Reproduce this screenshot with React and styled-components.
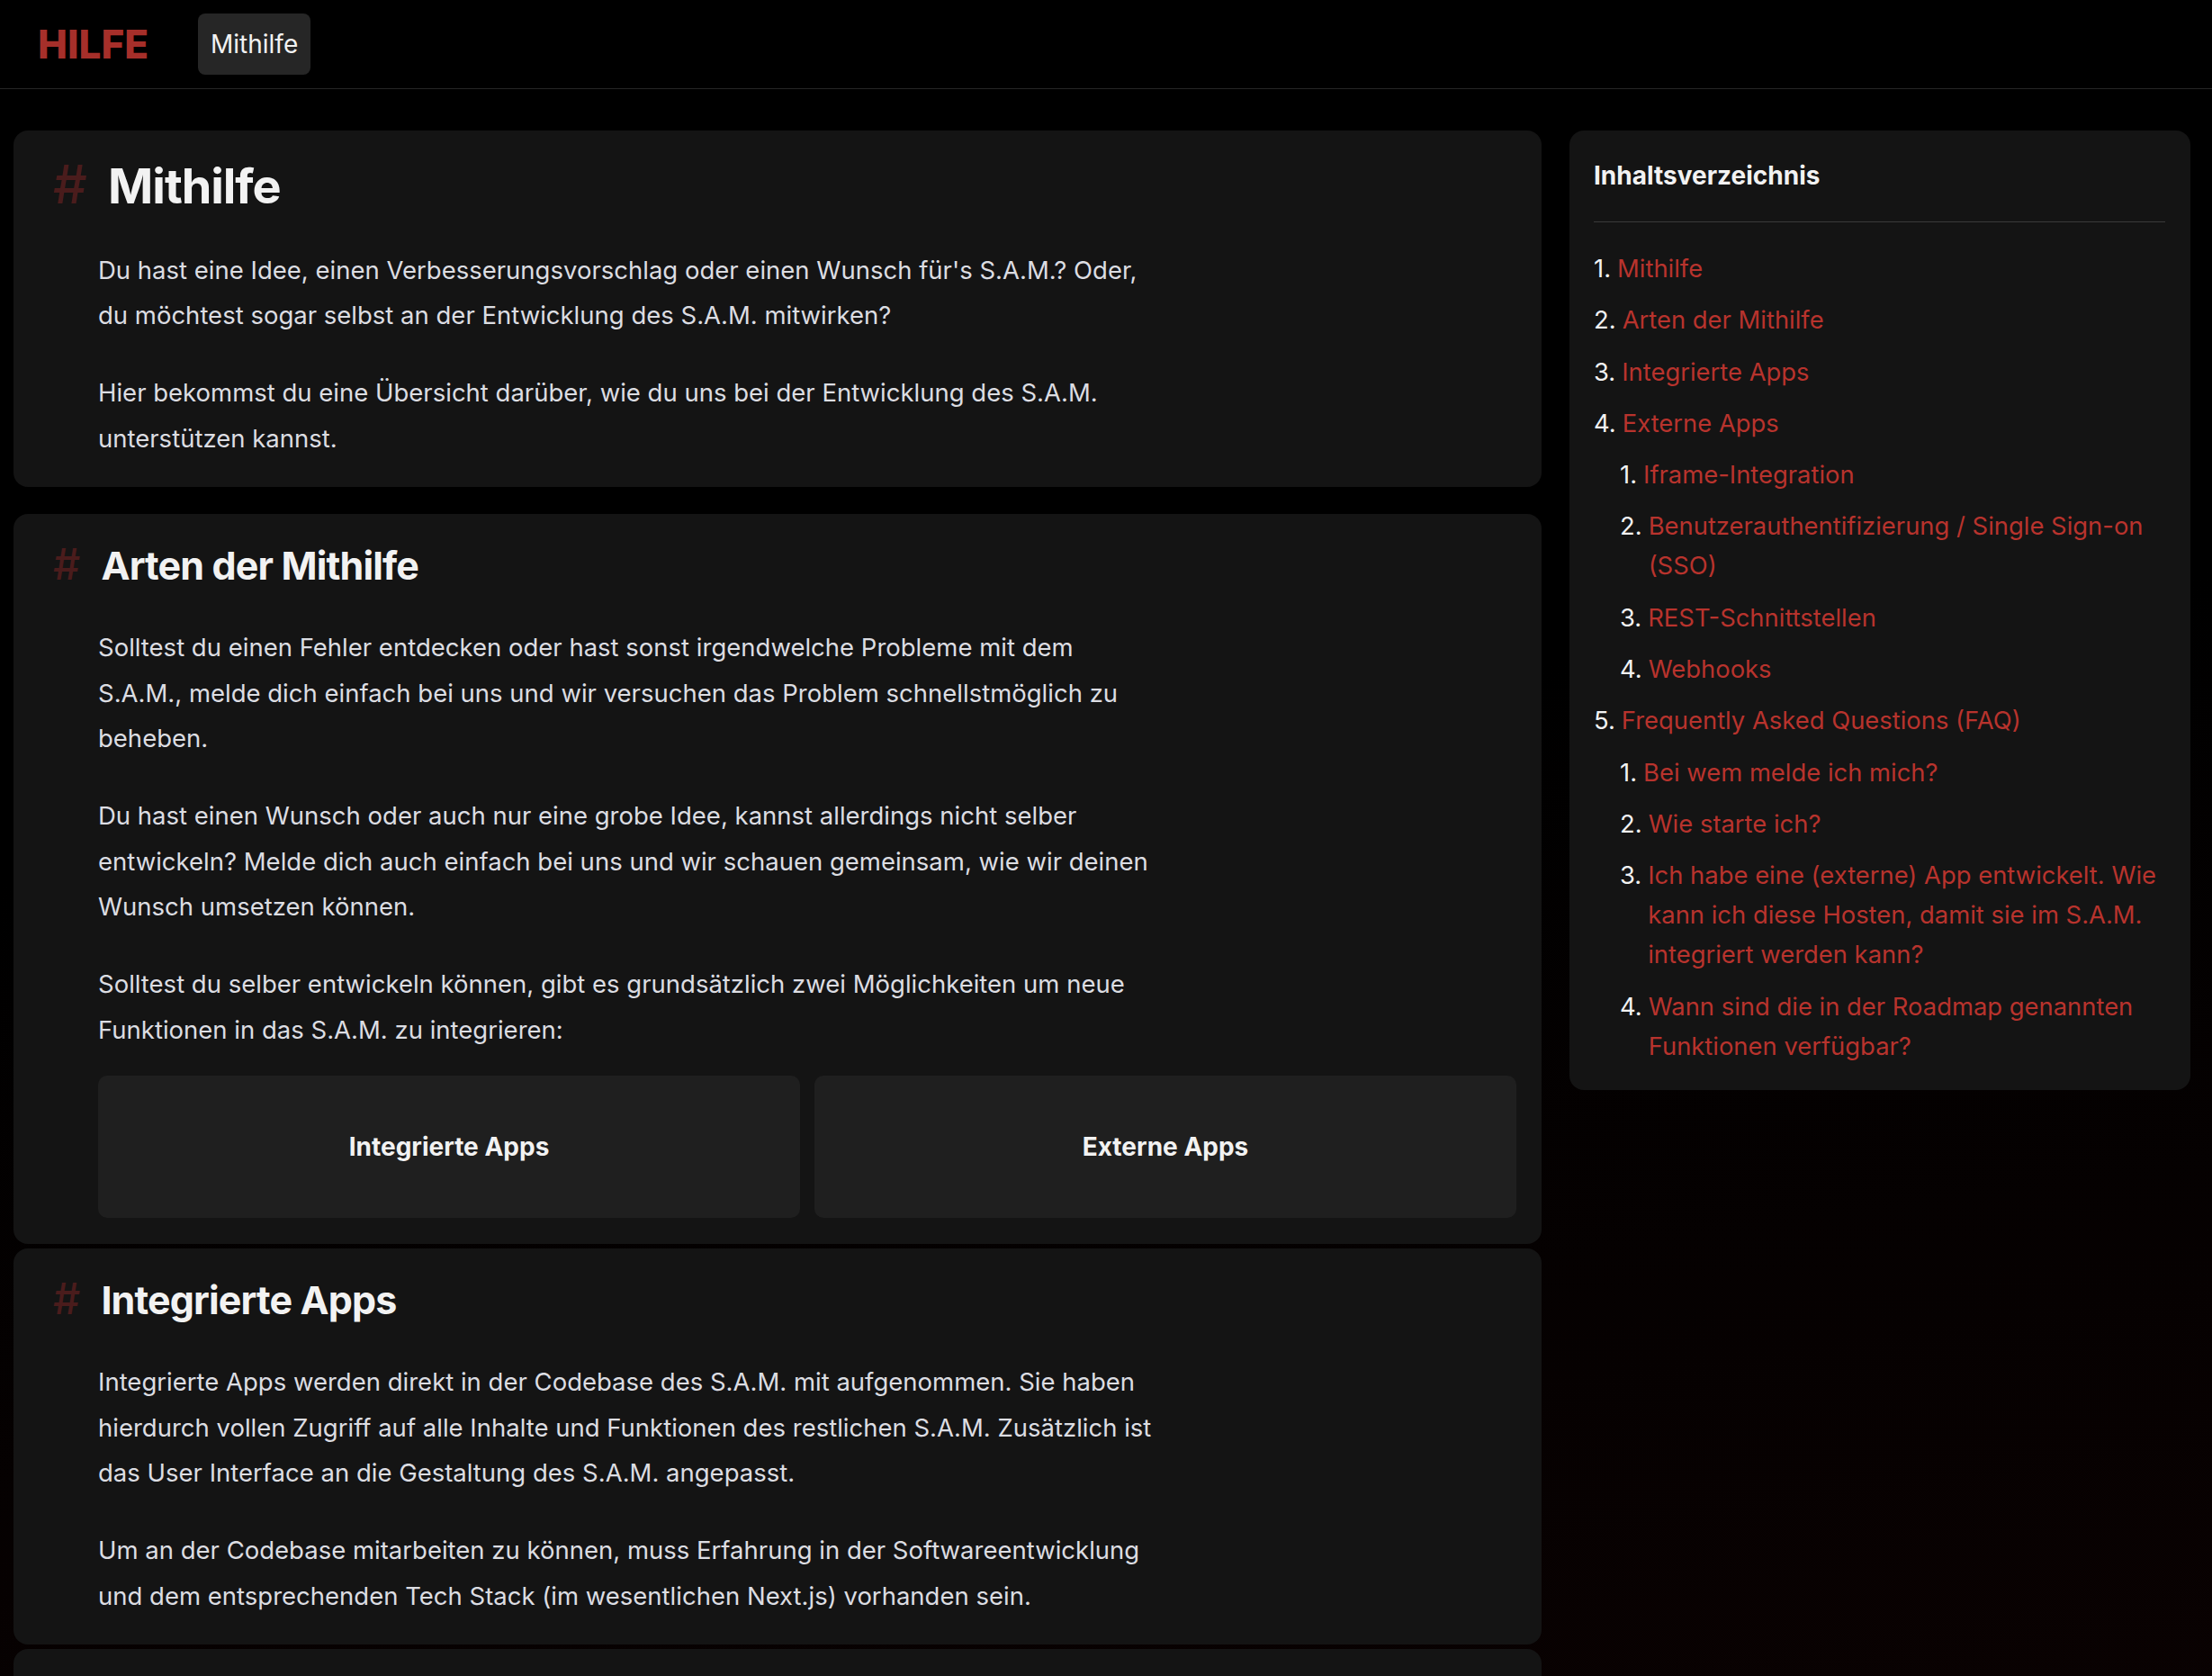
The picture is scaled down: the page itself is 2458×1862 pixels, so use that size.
import React from 'react';
import styled, { createGlobalStyle } from 'styled-components';

const GlobalStyle = createGlobalStyle`
  * {
    box-sizing: border-box;
  }

  html,
  body {
    margin: 0;
    padding: 0;
    background: #000;
    overflow: hidden;
  }

  body {
    font-family: Inter, 'Noto Sans', 'Liberation Sans', sans-serif;
    color: #dcdde2;
  }
`;

const sections = [
  {
    id: 'mithilfe',
    title: 'Mithilfe',
    level: 1,
    paragraphs: [
      "Du hast eine Idee, einen Verbesserungsvorschlag oder einen Wunsch für's S.A.M.? Oder, du möchtest sogar selbst an der Entwicklung des S.A.M. mitwirken?",
      'Hier bekommst du eine Übersicht darüber, wie du uns bei der Entwicklung des S.A.M. unterstützen kannst.',
    ],
  },
  {
    id: 'arten',
    title: 'Arten der Mithilfe',
    level: 2,
    paragraphs: [
      'Solltest du einen Fehler entdecken oder hast sonst irgendwelche Probleme mit dem S.A.M., melde dich einfach bei uns und wir versuchen das Problem schnellstmöglich zu beheben.',
      'Du hast einen Wunsch oder auch nur eine grobe Idee, kannst allerdings nicht selber entwickeln? Melde dich auch einfach bei uns und wir schauen gemeinsam, wie wir deinen Wunsch umsetzen können.',
      'Solltest du selber entwickeln können, gibt es grundsätzlich zwei Möglichkeiten um neue Funktionen in das S.A.M. zu integrieren:',
    ],
    links: ['Integrierte Apps', 'Externe Apps'],
  },
  {
    id: 'integrierte-apps',
    title: 'Integrierte Apps',
    level: 2,
    paragraphs: [
      'Integrierte Apps werden direkt in der Codebase des S.A.M. mit aufgenommen. Sie haben hierdurch vollen Zugriff auf alle Inhalte und Funktionen des restlichen S.A.M. Zusätzlich ist das User Interface an die Gestaltung des S.A.M. angepasst.',
      'Um an der Codebase mitarbeiten zu können, muss Erfahrung in der Softwareentwicklung und dem entsprechenden Tech Stack (im wesentlichen Next.js) vorhanden sein.',
    ],
  },
  {
    id: 'externe-apps',
    title: 'Externe Apps',
    level: 2,
    paragraphs: [
      'Externe Apps werden unabhängig vom S.A.M. entwickelt und gehostet und über verschiedene Schnittstellen eingebunden.',
    ],
  },
];

const toc = [
  { label: 'Mithilfe' },
  { label: 'Arten der Mithilfe' },
  { label: 'Integrierte Apps' },
  {
    label: 'Externe Apps',
    children: [
      'Iframe-Integration',
      'Benutzerauthentifizierung / Single Sign-on (SSO)',
      'REST-Schnittstellen',
      'Webhooks',
    ],
  },
  {
    label: 'Frequently Asked Questions (FAQ)',
    children: [
      'Bei wem melde ich mich?',
      'Wie starte ich?',
      'Ich habe eine (externe) App entwickelt. Wie kann ich diese Hosten, damit sie im S.A.M. integriert werden kann?',
      'Wann sind die in der Roadmap genannten Funktionen verfügbar?',
    ],
  },
];

const App = () => {
  return (
    <Page>
      <GlobalStyle />
      <Header>
        <Logo>HILFE</Logo>
        <NavButton type="button">Mithilfe</NavButton>
      </Header>

      <Layout>
        <Main>
          {sections.map((section, i) => (
            <Section key={section.id} $gap={i === 0 ? 30 : 5}>
              <Heading as={section.level === 1 ? 'h1' : 'h2'} $level={section.level}>
                <Hash $level={section.level}>#</Hash>
                {section.title}
              </Heading>
              {section.paragraphs.map((text) => (
                <Paragraph key={text.slice(0, 20)}>{text}</Paragraph>
              ))}
              {section.links && (
                <LinkGrid>
                  {section.links.map((label) => (
                    <LinkCard key={label} href={'#' + label}>
                      {label}
                    </LinkCard>
                  ))}
                </LinkGrid>
              )}
            </Section>
          ))}
        </Main>

        <Toc>
          <TocTitle>Inhaltsverzeichnis</TocTitle>
          <Divider />
          <TocList>
            {toc.map((item, i) => (
              <TocItem key={item.label}>
                <TocRow>
                  <TocNum>{i + 1}.</TocNum>
                  <TocLink href="#">{item.label}</TocLink>
                </TocRow>
                {item.children && (
                  <TocList $nested>
                    {item.children.map((child, j) => (
                      <TocItem key={child}>
                        <TocRow>
                          <TocNum>{j + 1}.</TocNum>
                          <TocLink href="#">{child}</TocLink>
                        </TocRow>
                      </TocItem>
                    ))}
                  </TocList>
                )}
              </TocItem>
            ))}
          </TocList>
        </Toc>
      </Layout>
    </Page>
  );
};

const Page = styled.div`
  min-height: 100vh;
  background: linear-gradient(172deg, #000 0%, #000 40%, #0b0202 100%);
`;

const Header = styled.header`
  height: 99px;
  display: flex;
  align-items: center;
  gap: 55px;
  padding: 0 42px;
  background: #000;
  border-bottom: 1px solid #262626;
`;

const Logo = styled.div`
  font-size: 44px;
  font-weight: 800;
  line-height: 1;
  color: #a62f2a;
`;

const NavButton = styled.button`
  height: 68px;
  padding: 0 14px;
  border: none;
  border-radius: 8px;
  background: #262626;
  color: #f2f2f2;
  font-family: inherit;
  font-size: 28px;
  font-weight: 400;
  cursor: pointer;
`;

const Layout = styled.div`
  display: grid;
  grid-template-columns: 1fr 690px;
  gap: 31px;
  align-items: start;
  padding: 46px 24px 0 15px;
`;

const Main = styled.main`
  display: flex;
  flex-direction: column;
`;

const Section = styled.section`
  background: #141414;
  border-radius: 16px;
  padding: 30px 28px 29px 94px;
  margin-bottom: ${(p) => p.$gap}px;
`;

const Heading = styled.h2`
  display: flex;
  align-items: baseline;
  margin: ${(p) => (p.$level === 1 ? '0 0 35px' : '1.5px 0 40px')} -50px;
  font-size: ${(p) => (p.$level === 1 ? 54 : 43)}px;
  font-weight: 700;
  line-height: 1.2;
  letter-spacing: -0.02em;
  color: #f2f2f2;
`;

const Hash = styled.span`
  font-size: 1.1em;
  line-height: 1;
  color: #4a1c1c;
  font-weight: 500;
  letter-spacing: 0;
  margin-right: ${(p) => (p.$level === 1 ? 0.39 : 0.49)}em;
`;

const Paragraph = styled.p`
  margin: 0;
  max-width: 1180px;
  font-size: 27.5px;
  line-height: 50.5px;

  & + & {
    margin-top: 35.5px;
  }
`;

const LinkGrid = styled.div`
  display: grid;
  grid-template-columns: 1fr 1fr;
  gap: 16px;
  margin-top: 26px;
`;

const LinkCard = styled.a`
  height: 158px;
  display: flex;
  align-items: center;
  justify-content: center;
  border-radius: 10px;
  background: #1f1f1f;
  color: #f2f2f2;
  font-size: 28px;
  font-weight: 700;
  text-decoration: none;
`;

const Toc = styled.aside`
  background: #141414;
  border-radius: 16px;
  padding: 29px 28px 27px 27px;
`;

const TocTitle = styled.h3`
  margin: 0;
  font-size: 28px;
  font-weight: 700;
  line-height: 42px;
  color: #f2f2f2;
`;

const Divider = styled.hr`
  border: none;
  border-top: 1px solid #3a3a3a;
  margin: 30px 0 29px;
`;

const TocList = styled.ol`
  list-style: none;
  margin: ${(p) => (p.$nested ? '13.3px 0 0' : '0')};
  padding: 0 0 0 ${(p) => (p.$nested ? 29 : 0)}px;
  display: flex;
  flex-direction: column;
  gap: 13.3px;
`;

const TocItem = styled.li`
  font-size: 27.4px;
  line-height: 44px;
`;

const TocRow = styled.div`
  display: flex;
`;

const TocNum = styled.span`
  flex: none;
  margin-right: 7px;
  color: #f2f2f2;
`;

const TocLink = styled.a`
  color: #b8332d;
  text-decoration: none;
`;

export default App;
